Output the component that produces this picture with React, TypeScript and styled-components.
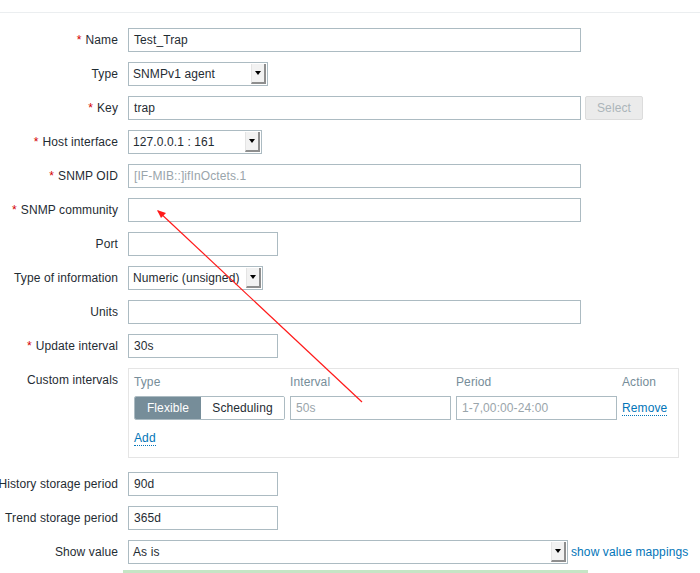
import styled, { createGlobalStyle } from "styled-components";

const GlobalStyle = createGlobalStyle`
	html, body {
		margin: 0;
		padding: 0;
		background: #ffffff;
	}
	body {
		font-family: "Liberation Sans", Arial, sans-serif;
		font-size: 12px;
		letter-spacing: 0.1px;
		color: #1f2c33;
	}
`;

const Page = styled.div`
	position: relative;
	width: 700px;
	height: 573px;
	overflow: hidden;
`;

const TopBar = styled.div`
	height: 12px;
	border-bottom: 1px solid #ebeef0;
`;

const Form = styled.div`
	display: grid;
	grid-template-columns: 118px 1fr;
	column-gap: 10px;
	row-gap: 10px;
	padding-top: 15px;
`;

const Label = styled.div<{ top?: boolean }>`
	display: flex;
	justify-content: flex-end;
	align-items: ${props => (props.top ? "flex-start" : "center")};
	padding-top: ${props => (props.top ? "5px" : "0")};
	height: ${props => (props.top ? "auto" : "24px")};
	white-space: nowrap;
`;

const Asterisk = styled.span`
	color: #d40000;
	margin-right: 4px;
`;

const Field = styled.div`
	display: flex;
	align-items: center;
	gap: 4px;
	min-height: 24px;
`;

const TextInput = styled.div<{ width: number; placeholder?: boolean }>`
	box-sizing: border-box;
	width: ${props => props.width}px;
	height: 24px;
	border: 1px solid #acbbc2;
	padding: 0 5px;
	display: flex;
	align-items: center;
	background: #ffffff;
	color: ${props => (props.placeholder ? "#9aa5ab" : "#1f2c33")};
`;

const SelectBox = styled.div<{ width: number }>`
	box-sizing: border-box;
	width: ${props => props.width}px;
	height: 24px;
	border: 1px solid #acbbc2;
	display: flex;
	align-items: stretch;
	background: #ffffff;
`;

const SelectText = styled.div`
	flex: 1;
	display: flex;
	align-items: center;
	padding-left: 4px;
`;

const SelectArrow = styled.div`
	width: 12px;
	margin: 1px;
	background: #f2f2f2;
	border-right: 2px solid #8e8e8e;
	border-bottom: 2px solid #8e8e8e;
	border-left: 1px solid #e4e4e4;
	display: flex;
	align-items: center;
	justify-content: center;

	&::after {
		content: "";
		border-left: 3px solid transparent;
		border-right: 3px solid transparent;
		border-top: 4px solid #000000;
	}
`;

const DisabledButton = styled.div`
	box-sizing: border-box;
	width: 58px;
	height: 24px;
	background: #ebebeb;
	border: 1px solid #dcdcdc;
	border-radius: 2px;
	color: #acb5ba;
	display: flex;
	align-items: center;
	justify-content: center;
`;

const Link = styled.span`
	color: #0275b8;
	border-bottom: 1px dotted #0275b8;
	line-height: 14px;
`;

const PlainLink = styled.span`
	color: #0275b8;
	margin-left: -1px;
`;

const IntervalsBox = styled.div`
	box-sizing: border-box;
	width: 551px;
	border: 1px solid #e5e5e5;
	padding: 6px 5px 12px 5px;
	margin-bottom: 4px;
`;

const IntervalsGrid = styled.div`
	display: grid;
	grid-template-columns: 151px 161px 161px auto;
	column-gap: 5px;
	row-gap: 7px;
	align-items: center;
`;

const ColHead = styled.div`
	color: #768d99;
	height: 14px;
	line-height: 15px;
`;

const Segmented = styled.div`
	display: flex;
	box-sizing: border-box;
	height: 24px;
	border: 1px solid #acbbc2;
	border-radius: 2px;
	overflow: hidden;
`;

const Segment = styled.div<{ active?: boolean }>`
	display: flex;
	align-items: center;
	justify-content: center;
	width: ${props => (props.active ? "66px" : "83px")};
	background: ${props => (props.active ? "#768d99" : "#ffffff")};
	color: ${props => (props.active ? "#ffffff" : "#1f2c33")};
`;

const AddRow = styled.div`
	margin-top: 11px;
`;

const GreenEdge = styled.div`
	margin-left: -5px;
	width: 463px;
	height: 6px;
	border-top: 3px solid #c5e5c5;
	border-left: 1px solid #c5e5c5;
	border-right: 1px solid #c5e5c5;
	margin-top: -4px;
`;

const Annotation = styled.svg`
	position: absolute;
	left: 0;
	top: 0;
	pointer-events: none;
`;

function Req({ children }: { children: string }) {
	return (
		<Label>
			<Asterisk>*</Asterisk>
			{children}
		</Label>
	);
}

function Select({ width, value }: { width: number; value: string }) {
	return (
		<SelectBox width={width}>
			<SelectText>{value}</SelectText>
			<SelectArrow />
		</SelectBox>
	);
}

export default function App() {
	return (
		<Page>
			<GlobalStyle />
			<TopBar />
			<Form>
				<Req>Name</Req>
				<Field>
					<TextInput width={453}>Test_Trap</TextInput>
				</Field>

				<Label>Type</Label>
				<Field>
					<Select width={140} value="SNMPv1 agent" />
				</Field>

				<Req>Key</Req>
				<Field>
					<TextInput width={453}>trap</TextInput>
					<DisabledButton>Select</DisabledButton>
				</Field>

				<Req>Host interface</Req>
				<Field>
					<Select width={134} value="127.0.0.1 : 161" />
				</Field>

				<Req>SNMP OID</Req>
				<Field>
					<TextInput width={453} placeholder>
						[IF-MIB::]ifInOctets.1
					</TextInput>
				</Field>

				<Req>SNMP community</Req>
				<Field>
					<TextInput width={453} />
				</Field>

				<Label>Port</Label>
				<Field>
					<TextInput width={150} />
				</Field>

				<Label>Type of information</Label>
				<Field>
					<Select width={135} value="Numeric (unsigned)" />
				</Field>

				<Label>Units</Label>
				<Field>
					<TextInput width={453} />
				</Field>

				<Req>Update interval</Req>
				<Field>
					<TextInput width={150}>30s</TextInput>
				</Field>

				<Label top>Custom intervals</Label>
				<Field>
					<IntervalsBox>
						<IntervalsGrid>
							<ColHead>Type</ColHead>
							<ColHead>Interval</ColHead>
							<ColHead>Period</ColHead>
							<ColHead>Action</ColHead>
							<Segmented>
								<Segment active>Flexible</Segment>
								<Segment>Scheduling</Segment>
							</Segmented>
							<TextInput width={161} placeholder>
								50s
							</TextInput>
							<TextInput width={161} placeholder>
								1-7,00:00-24:00
							</TextInput>
							<div>
								<Link>Remove</Link>
							</div>
						</IntervalsGrid>
						<AddRow>
							<Link>Add</Link>
						</AddRow>
					</IntervalsBox>
				</Field>

				<Label>History storage period</Label>
				<Field>
					<TextInput width={150}>90d</TextInput>
				</Field>

				<Label>Trend storage period</Label>
				<Field>
					<TextInput width={150}>365d</TextInput>
				</Field>

				<Label>Show value</Label>
				<Field>
					<Select width={440} value="As is" />
					<PlainLink>show value mappings</PlainLink>
				</Field>

				<div />
				<GreenEdge />
			</Form>

			<Annotation width={700} height={573} viewBox="0 0 700 573">
				<line x1={362} y1={402} x2={158} y2={211} stroke="#ff1a1a" strokeWidth={1.2} />
				<polygon points="157,210 166,213 161,218" fill="#ff1a1a" />
			</Annotation>
		</Page>
	);
}
